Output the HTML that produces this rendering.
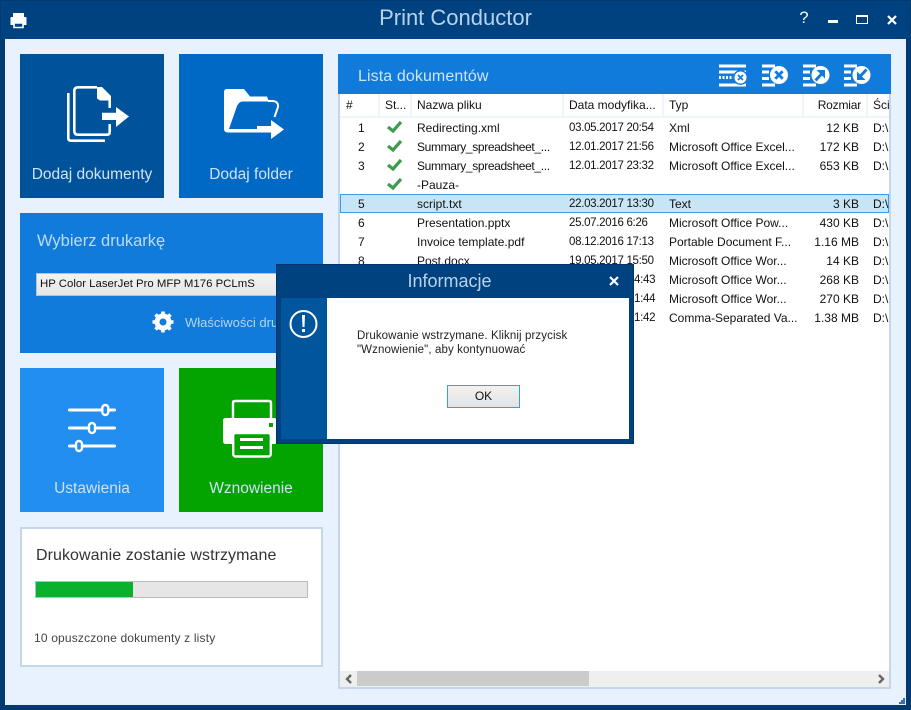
<!DOCTYPE html>
<html><head><meta charset="utf-8">
<style>
*{box-sizing:border-box}
html,body{margin:0;padding:0;width:911px;height:710px;overflow:hidden;background:#003a70;font-family:"Liberation Sans",sans-serif}
.a{position:absolute}
.tile{position:absolute;color:#cfe2f6;font-size:15.5px;text-align:center}
.tile span{position:absolute;left:0;right:0;top:112px}
.h{position:absolute;top:94px;height:23px;font-size:12px;line-height:23px;color:#111;white-space:nowrap}
.sep{position:absolute;top:94px;width:2px;height:23px;background:#eef5fd}
.c{position:absolute;font-size:12px;color:#111;white-space:nowrap;line-height:19px;height:19px;margin-top:1px}
.d{font-size:11.5px;letter-spacing:-.3px}
.s{letter-spacing:-.35px}
.r{left:762px;width:97px;text-align:right}
</style></head>
<body>
<div class="a" style="left:0;top:0;width:911px;height:710px;background:#003a70"></div>
<div class="a" style="left:1px;top:1px;width:909px;height:38px;background:#00427f"></div>
<div class="a" style="left:5px;top:39px;width:901px;height:666px;background:#e8f2fe"></div>
<div class="a" style="left:0;top:4px;width:911px;text-align:center;color:#b9d2ea;font-size:22px;line-height:28px">Print Conductor</div>
<svg class="a" style="left:10px;top:12px" width="17" height="17" viewBox="0 0 17 17"><path d="M3 1h11v4H3z" fill="#fff"/><path d="M1.500 5h14q1 0 1 1v7h-3v-2H3.500v2H.5V6q0-1 1-1z" fill="#fff"/><path d="M4 11h9v4.500H4z" fill="none" stroke="#fff" stroke-width="1.600"/></svg>
<!-- window controls -->
<div class="a" style="left:798px;top:9px;width:12px;color:#fff;font-size:16.500px;line-height:19px;text-align:center">?</div>
<div class="a" style="left:828px;top:20px;width:10px;height:3px;background:#fff"></div>
<div class="a" style="left:856px;top:15px;width:12px;height:9px;border:1px solid #fff;border-top-width:2px"></div>
<svg class="a" style="left:887px;top:15px" width="10" height="10" viewBox="0 0 10 10"><path d="M1 1l8 8M9 1l-8 8" stroke="#fff" stroke-width="2.200"/></svg>

<!-- tiles -->
<div class="tile" style="left:20px;top:54px;width:144px;height:144px;background:#00529b"><span>Dodaj dokumenty</span></div>
<svg class="a" style="left:60px;top:80px" width="80" height="70" viewBox="60 80 80 70" fill="none" stroke="#fff" stroke-width="2.600">
<path d="M68.300 93v45q0 2.700 2.700 2.700h34"/>
<path d="M97 87.300H78q-3.700 0-3.700 3.700v40q0 3.700 3.700 3.700h29q2.700 0 2.700-2.700v-8M109.700 108v-8"/>
<path d="M97 87h5l9 9v4.500h-11l-3-2z" fill="#fff" stroke="none"/>
<path d="M102 112.700h14V107l13 9.500-13 10.500v-7h-14z" fill="#fff" stroke="none"/></svg>

<div class="tile" style="left:179px;top:54px;width:144px;height:144px;background:#0069c6"><span>Dodaj folder</span></div>
<svg class="a" style="left:220px;top:85px" width="70" height="60" viewBox="220 85 70 60">
<path d="M227 89h17l6 7.500h17l2 5h-26q-4 0-6 4.500l-8 23h29v3.500h-30q-4 0-4-3.500V92q0-3 3-3z" fill="#fff"/>
<path d="M268 101h4q6.500 0 6 6l-3.500 10" fill="none" stroke="#fff" stroke-width="2"/>
<path d="M257 126h14v-6l13 9.500-13 9.500v-6.500h-14z" fill="#fff"/></svg>

<div class="tile" style="left:20px;top:213px;width:303px;height:140px;background:#117bdb"></div>
<div class="a" style="left:37px;top:230px;color:#bddaf5;font-size:16.500px;line-height:22px">Wybierz drukarkę</div>
<div class="a" style="left:36px;top:273px;width:254px;height:23px;background:linear-gradient(#f3f3f3,#e6e6e6);border:1px solid #b8c2cc;color:#111;font-size:11.400px;line-height:21px;padding-left:3px">HP Color LaserJet Pro MFP M176 PCLmS</div>
<svg class="a" style="left:152px;top:311px" width="22" height="22" viewBox="0 0 22 22"><circle cx="11" cy="11" r="6" fill="none" stroke="#fff" stroke-width="5"/><path d="M11 .5v4M11 17.500v4M.5 11h4M17.500 11h4M3.500 3.500l3 3M15.500 15.500l3 3M18.500 3.500l-3 3M6.500 15.500l-3 3" stroke="#fff" stroke-width="3.600"/></svg>
<div class="a" style="left:185px;top:314px;color:#b3d4f3;font-size:13px;line-height:18px">Właściwości dru</div>

<div class="tile" style="left:20px;top:368px;width:144px;height:144px;background:#218ef0"><span>Ustawienia</span></div>
<svg class="a" style="left:60px;top:400px" width="64" height="56" viewBox="60 400 64 56" fill="none" stroke="#fff">
<path d="M69.500 410h45M69.500 428h45M69.500 446h45" stroke-width="3" stroke-linecap="round"/>
<rect x="102.300" y="405" width="6" height="10" rx="3" fill="#218ef0" stroke-width="2.400"/>
<rect x="89" y="423" width="6" height="10" rx="3" fill="#218ef0" stroke-width="2.400"/>
<rect x="76" y="441" width="6" height="10" rx="3" fill="#218ef0" stroke-width="2.400"/></svg>

<div class="tile" style="left:179px;top:368px;width:144px;height:144px;background:#03a300"><span>Wznowienie</span></div>
<svg class="a" style="left:220px;top:398px" width="60" height="62" viewBox="220 398 60 62">
<path d="M233 419v-16q0-2 2-2h34q2 0 2 2v16" fill="none" stroke="#fff" stroke-width="2.400"/>
<path d="M226 418h48q3 0 3 3v20q0 3-3 3h-48q-3 0-3-3v-21q0-2 3-2z" fill="#fff"/>
<rect x="233.200" y="433" width="37.600" height="23.500" rx="2.500" fill="#03a300" stroke="#fff" stroke-width="2.400"/>
<path d="M240 438h23v3h-23zM240 446h23v3h-23z" fill="#fff"/>
<rect x="269" y="423" width="4" height="4" fill="#03a300"/></svg>

<!-- status -->
<div class="a" style="left:20px;top:527px;width:303px;height:140px;background:#fff;border:2px solid #c5d5ea"></div>
<div class="a" style="left:36px;top:546px;color:#333;font-size:16px;line-height:20px;letter-spacing:.07px">Drukowanie zostanie wstrzymane</div>
<div class="a" style="left:35px;top:581px;width:273px;height:17px;background:#e6e6e6;border:1px solid #bcbcbc"></div>
<div class="a" style="left:36px;top:582px;width:97px;height:15px;background:#0bb02c"></div>
<div class="a" style="left:34px;top:630px;color:#444;font-size:12px;line-height:17px;letter-spacing:.17px">10 opuszczone dokumenty z listy</div>

<!-- list -->
<div class="a" style="left:338px;top:54px;width:553px;height:635px;background:#fff;border:2px solid #c5d5ea;border-top:0"></div>
<div class="a" style="left:338px;top:54px;width:553px;height:40px;background:#117bdb"></div>
<div class="a" style="left:358px;top:66px;color:#cfe4f8;font-size:16px;line-height:22px;letter-spacing:.1px">Lista dokumentów</div>
<svg class="a" style="left:718px;top:62px" width="155" height="26" viewBox="718 62 155 26" fill="#fff">
<path d="M719 64.500h27v3h-27zM719 70.500h27v3h-27zM719 83.500h27v3h-27z"/>
<path d="M719 77.500h16" stroke="#fff" stroke-width="3" stroke-dasharray="2 1.500"/>
<circle cx="740.500" cy="77.500" r="7.500" fill="#117bdb"/><circle cx="740.500" cy="77.500" r="6"/><path d="M738 75l5 5M743 75l-5 5" stroke="#117bdb" stroke-width="1.600"/>
<path d="M762 64.500h13v3h-13zM762 70.500h7v3h-7zM762 77h7v3h-7zM762 83.500h13v3h-13z"/>
<circle cx="779" cy="75" r="9"/><path d="M775.300 71.300l7.400 7.400M782.700 71.300l-7.400 7.400" stroke="#117bdb" stroke-width="2.800"/>
<path d="M803 64.500h13v3h-13zM803 70.500h7v3h-7zM803 77h7v3h-7zM803 83.500h13v3h-13z"/>
<circle cx="820.500" cy="75" r="9"/><path d="M825 70v8.500L816.500 70z" fill="#117bdb"/><path d="M815.500 80.500l6.500-7" stroke="#117bdb" stroke-width="3"/>
<path d="M844 64.500h13v3h-13zM844 70.500h7v3h-7zM844 77h7v3h-7zM844 83.500h13v3h-13z"/>
<circle cx="861.500" cy="75" r="9"/><path d="M857 80h8.500L857 71.500z" fill="#117bdb"/><path d="M866.500 69.500l-6.500 7" stroke="#117bdb" stroke-width="3"/>
</svg>

<div class="a" style="left:340px;top:116px;width:549px;height:2px;background:#eef5fd"></div>
<div class="h" style="left:346px">#</div>
<div class="sep" style="left:378px"></div>
<div class="h" style="left:385px">St...</div>
<div class="sep" style="left:410px"></div>
<div class="h" style="left:417px">Nazwa pliku</div>
<div class="sep" style="left:562px"></div>
<div class="h" style="left:569px">Data modyfika...</div>
<div class="sep" style="left:662px"></div>
<div class="h" style="left:669px">Typ</div>
<div class="sep" style="left:802px"></div>
<div class="h" style="left:762px;width:99px;text-align:right;letter-spacing:-.2px">Rozmiar</div>
<div class="sep" style="left:866px"></div>
<div class="h" style="left:873px;width:16px;overflow:hidden">Ści</div>

<!-- selected row -->
<div class="a" style="left:340px;top:194px;width:549px;height:19px;background:#c6e5f6;border:1px solid #3c9ae8"></div>

<svg class="a" style="left:386px;top:119px" width="18" height="76" viewBox="0 0 18 76" fill="none" stroke="#3f9b4d" stroke-width="3.200">
<path d="M2 8l5 4 8-9M2 27l5 4 8-9M2 46l5 4 8-9M2 65l5 4 8-9"/></svg>

<!-- rows -->
<div class="c" style="left:358px;top:118px">1</div><div class="c" style="left:417px;top:118px">Redirecting.xml</div><div class="c d" style="left:569px;top:118px">03.05.2017 20:54</div><div class="c" style="left:669px;top:118px">Xml</div><div class="c r" style="top:118px">12 KB</div><div class="c" style="left:873px;top:118px">D:\</div>
<div class="c" style="left:358px;top:137px">2</div><div class="c s" style="left:417px;top:137px">Summary_spreadsheet_...</div><div class="c d" style="left:569px;top:137px">12.01.2017 21:56</div><div class="c" style="left:669px;top:137px">Microsoft Office Excel...</div><div class="c r" style="top:137px">172 KB</div><div class="c" style="left:873px;top:137px">D:\</div>
<div class="c" style="left:358px;top:156px">3</div><div class="c s" style="left:417px;top:156px">Summary_spreadsheet_...</div><div class="c d" style="left:569px;top:156px">12.01.2017 23:32</div><div class="c" style="left:669px;top:156px">Microsoft Office Excel...</div><div class="c r" style="top:156px">653 KB</div><div class="c" style="left:873px;top:156px">D:\</div>
<div class="c" style="left:417px;top:175px">-Pauza-</div>
<div class="c" style="left:358px;top:194px">5</div><div class="c" style="left:417px;top:194px">script.txt</div><div class="c d" style="left:569px;top:194px">22.03.2017 13:30</div><div class="c" style="left:669px;top:194px">Text</div><div class="c r" style="top:194px">3 KB</div><div class="c" style="left:873px;top:194px">D:\</div>
<div class="c" style="left:358px;top:213px">6</div><div class="c" style="left:417px;top:213px">Presentation.pptx</div><div class="c d" style="left:569px;top:213px">25.07.2016 6:26</div><div class="c" style="left:669px;top:213px">Microsoft Office Pow...</div><div class="c r" style="top:213px">430 KB</div><div class="c" style="left:873px;top:213px">D:\</div>
<div class="c" style="left:358px;top:232px">7</div><div class="c" style="left:417px;top:232px">Invoice template.pdf</div><div class="c d" style="left:569px;top:232px">08.12.2016 17:13</div><div class="c" style="left:669px;top:232px">Portable Document F...</div><div class="c r" style="top:232px">1.16 MB</div><div class="c" style="left:873px;top:232px">D:\</div>
<div class="c" style="left:358px;top:251px">8</div><div class="c" style="left:417px;top:251px">Post.docx</div><div class="c d" style="left:569px;top:251px">19.05.2017 15:50</div><div class="c" style="left:669px;top:251px">Microsoft Office Wor...</div><div class="c r" style="top:251px">14 KB</div><div class="c" style="left:873px;top:251px">D:\</div>
<div class="c d" style="left:634px;top:270px">4:43</div><div class="c" style="left:669px;top:270px">Microsoft Office Wor...</div><div class="c r" style="top:270px">268 KB</div><div class="c" style="left:873px;top:270px">D:\</div>
<div class="c d" style="left:634px;top:289px">1:44</div><div class="c" style="left:669px;top:289px">Microsoft Office Wor...</div><div class="c r" style="top:289px">270 KB</div><div class="c" style="left:873px;top:289px">D:\</div>
<div class="c d" style="left:634px;top:308px">1:42</div><div class="c" style="left:669px;top:308px">Comma-Separated Va...</div><div class="c r" style="top:308px">1.38 MB</div><div class="c" style="left:873px;top:308px">D:\</div>

<!-- scrollbar -->
<div class="a" style="left:340px;top:671px;width:549px;height:16px;background:#efefef"></div>
<div class="a" style="left:357px;top:671px;width:232px;height:15px;background:#cbcbcb"></div>
<svg class="a" style="left:344px;top:674px" width="14" height="10" viewBox="0 0 14 10"><path d="M7 1L3 5l4 4" fill="none" stroke="#666" stroke-width="2.400"/></svg>
<svg class="a" style="left:876px;top:674px" width="10" height="10" viewBox="0 0 10 10"><path d="M3 1l4 4-4 4" fill="none" stroke="#666" stroke-width="2.400"/></svg>
<svg class="a" style="left:899px;top:698px" width="6" height="6" viewBox="0 0 6 6" fill="#3a6ea5"><path d="M4 0h2v2H4zM2 2h2v2H2zM4 2h2v2H4zM0 4h2v2H0zM2 4h2v2H2zM4 4h2v2H4z"/></svg>

<!-- dialog -->
<div class="a" style="left:276px;top:264px;width:358px;height:180px;background:#00427f;border:1px solid #003468"></div>
<div class="a" style="left:281px;top:298px;width:46px;height:141px;background:#00559c"></div>
<div class="a" style="left:327px;top:298px;width:302px;height:141px;background:#fff"></div>
<div class="a" style="left:276px;top:269px;width:347px;text-align:center;color:#b9d2ea;font-size:18px;line-height:24px">Informacje</div>
<svg class="a" style="left:609px;top:276px" width="10" height="10" viewBox="0 0 10 10"><path d="M1 1l8 8M9 1l-8 8" stroke="#fff" stroke-width="2.200"/></svg>
<svg class="a" style="left:288px;top:309px" width="31" height="31" viewBox="0 0 31 31"><circle cx="15.500" cy="15" r="13" fill="none" stroke="#fff" stroke-width="2"/><path d="M14 6h3l-.5 12h-2z" fill="#fff"/><rect x="14" y="20" width="3" height="3" fill="#fff"/></svg>
<div class="a" style="left:357px;top:329px;color:#222;font-size:11.500px;line-height:14px;letter-spacing:.1px;white-space:nowrap">Drukowanie wstrzymane. Kliknij przycisk<br>"Wznowienie", aby kontynuować</div>
<div class="a" style="left:447px;top:385px;width:73px;height:23px;background:linear-gradient(#f2f2f2,#e3e3e3);border:1px solid #3c9ae8;color:#111;font-size:12px;line-height:21px;text-align:center">OK</div>
</body></html>
